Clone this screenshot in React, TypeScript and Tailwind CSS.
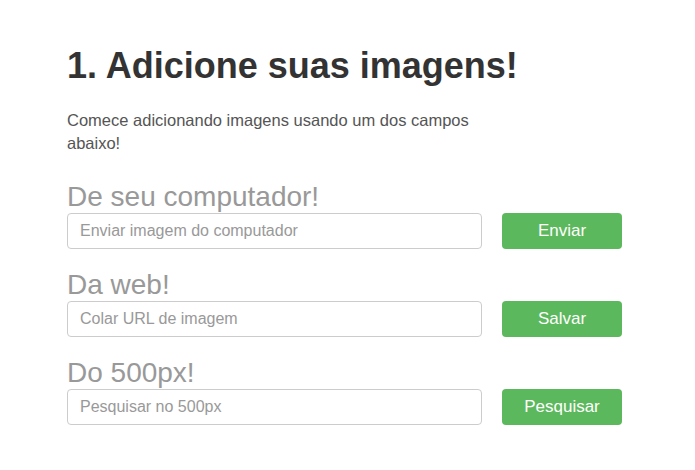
import React from "react";

const groups = [
  { title: "De seu computador!", placeholder: "Enviar imagem do computador", button: "Enviar" },
  { title: "Da web!", placeholder: "Colar URL de imagem", button: "Salvar" },
  { title: "Do 500px!", placeholder: "Pesquisar no 500px", button: "Pesquisar" },
];

export default function App() {
  return (
    <div
      className="min-h-[470px] w-[695px] bg-white pl-[67px] pt-[46px]"
      style={{ fontFamily: '"Liberation Sans", Arial, sans-serif' }}
    >
      <h1 className="text-[36px] font-bold leading-[1.1] text-[#333]">1. Adicione suas imagens!</h1>
      <p className="mt-[23px] w-[415px] text-[16.5px] leading-[23px] text-[#555]">
        Comece adicionando imagens usando um dos campos abaixo!
      </p>
      <div className="mt-[27px] flex flex-col gap-[21px]">
        {groups.map((g) => (
          <div key={g.title} className="flex flex-col">
            <h2 className="text-[28px] leading-[30px] text-[#999]">{g.title}</h2>
            <div className="mt-[1px] flex items-center gap-[20px]">
              <input
                type="text"
                placeholder={g.placeholder}
                className="h-[36px] w-[415px] rounded-[4px] border border-[#ccc] bg-white px-[12px] text-[16px] text-[#555] placeholder:text-[#999] outline-none"
              />
              <button
                type="button"
                className="h-[36px] w-[120px] rounded-[4px] bg-[#5cb85c] text-[17px] text-white"
              >
                {g.button}
              </button>
            </div>
          </div>
        ))}
      </div>
    </div>
  );
}
